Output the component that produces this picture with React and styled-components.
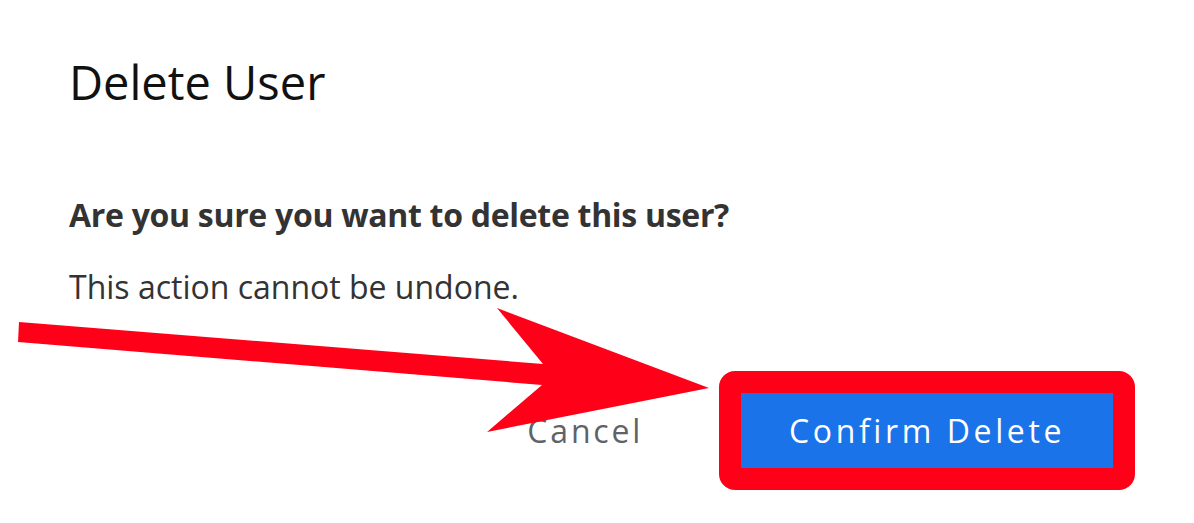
import React from 'react'
import styled, { createGlobalStyle } from 'styled-components'

const GlobalStyle = createGlobalStyle`
body {
  margin: 0;
  background: #fff;
  font-family: "Open Sans", "Noto Sans", sans-serif;
}
`

const Page = styled.div`
position: relative;
width: 1194px;
height: 523px;
overflow: hidden;
background: #fff;
`

const Dialog = styled.div`
display: flex;
flex-direction: column;
padding: 54px 59px 0 69px;
`

const Title = styled.h2`
margin: 0;
font-size: 47px;
line-height: 56px;
font-weight: 400;
color: #111;
`

const Body = styled.div`
display: flex;
flex-direction: column;
gap: 24px;
margin-top: 81px;
`

const Text = styled.p`
margin: 0;
font-size: 32px;
line-height: 48px;
font-weight: ${p => (p.$strong ? 700 : 400)};
letter-spacing: ${p => (p.$strong ? '-0.3px' : '0')};
color: #333;
`

const Actions = styled.div`
display: flex;
justify-content: flex-end;
align-items: center;
gap: 76px;
margin-top: 60px;
`

const TextButton = styled.button`
border: none;
background: none;
padding: 0;
font-family: inherit;
font-size: 32px;
line-height: 48px;
letter-spacing: 2.8px;
color: #5f6368;
cursor: pointer;
`

const Highlight = styled.span`
display: inline-flex;
border: 22px solid #ff0019;
border-radius: 16px;
`

const PrimaryButton = styled.button`
height: 75px;
padding: 0 48px;
border: none;
border-radius: 0;
background: #1a73e8;
color: #fff;
font-family: inherit;
font-size: 32px;
letter-spacing: 3.6px;
cursor: pointer;
`

const Arrow = styled.svg`
position: absolute;
left: 0;
top: 0;
pointer-events: none;
`

const App = () => {
  return (
    <Page>
      <GlobalStyle />
      <Dialog>
        <Title>Delete User</Title>
        <Body>
          <Text $strong>Are you sure you want to delete this user?</Text>
          <Text>This action cannot be undone.</Text>
        </Body>
        <Actions>
          <TextButton>Cancel</TextButton>
          <Highlight>
            <PrimaryButton>Confirm Delete</PrimaryButton>
          </Highlight>
        </Actions>
      </Dialog>
      <Arrow width="1194" height="523" viewBox="0 0 1194 523">
        <polygon
          points="19,322 543,364 497,308 709,388 487,432 542,385 18,342"
          fill="#ff0019"
        />
      </Arrow>
    </Page>
  )
}

export default App
